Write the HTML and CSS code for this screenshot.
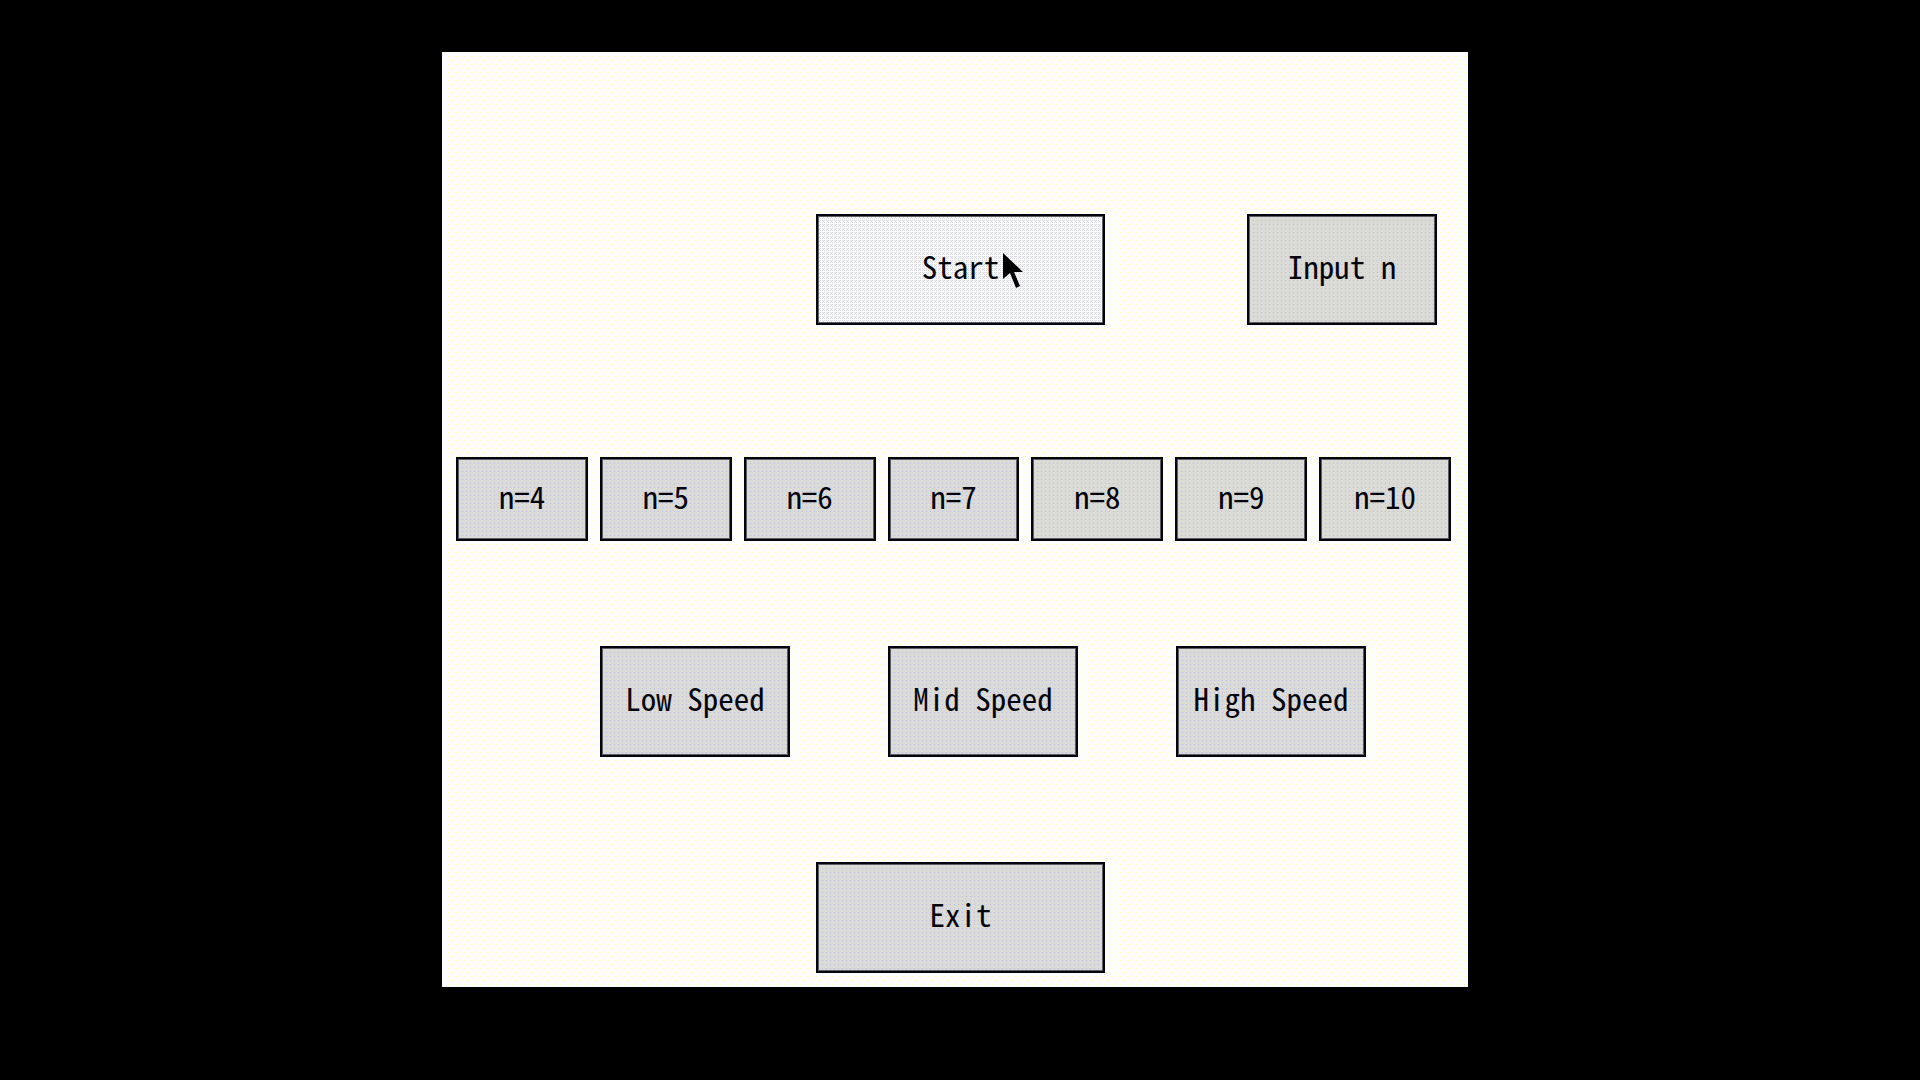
FILE: index.html
```html
<!DOCTYPE html>
<html lang="en">
<head>
<meta charset="utf-8">
<title>Menu</title>
<link rel="stylesheet" href="styles.css">
</head>
<body>
<main class="panel">
  <nav class="menu">
    <div class="row row-start">
      <button class="btn btn-start" type="button">Start<svg class="cursor" width="20" height="36" viewBox="0 0 20 36" aria-hidden="true"><path d="M0 0L20 19H11L17 33L13 35L7 20L0 26Z"/></svg></button>
      <button class="btn btn-input" type="button">Input n</button>
    </div>
    <div class="row row-sizes">
      <button class="btn btn-small" type="button">n=4</button>
      <button class="btn btn-small" type="button">n=5</button>
      <button class="btn btn-small" type="button">n=6</button>
      <button class="btn btn-small" type="button">n=7</button>
      <button class="btn btn-small" type="button">n=8</button>
      <button class="btn btn-small" type="button">n=9</button>
      <button class="btn btn-small" type="button">n=10</button>
    </div>
    <div class="row row-speed">
      <button class="btn btn-low" type="button">Low Speed</button>
      <button class="btn btn-mid" type="button">Mid Speed</button>
      <button class="btn btn-high" type="button">High Speed</button>
    </div>
    <div class="row row-exit">
      <button class="btn btn-exit" type="button">Exit</button>
    </div>
  </nav>
</main>
</body>
</html>
```
FILE: styles.css
```css
* {
  box-sizing: border-box;
}

body {
  margin: 0;
  min-height: 100vh;
  padding: 52px 452px 93px 442px;
  background: #000;
}

/* The light surface carries a sparse yellow dither. */
.panel {
  padding: 162px 17px 14px 14px;
  background-color: #fdfdff;
  background-image:
    conic-gradient(at 1px 1px, transparent 75%, #ffffa8 0),
    conic-gradient(at 1px 1px, transparent 75%, #ffffa8 0);
  background-position: 2px 0, 6px 4px;
  background-size: 8px 8px;
}

.menu {
  display: flex;
  flex-direction: column;
}

.row {
  display: grid;
}

.row-start {
  grid-template-columns: 360fr 289fr 142fr 190fr 14fr;
}

.row-sizes {
  grid-template-columns: repeat(7, minmax(0, 1fr));
  column-gap: 12px;
  margin-top: 132px;
}

.row-speed {
  grid-template-columns: 144fr 190fr 98fr 190fr 98fr 190fr 85fr;
  margin-top: 105px;
}

.row-exit {
  grid-template-columns: 360fr 289fr 346fr;
  margin-top: 105px;
}

.btn {
  height: 111px;
  padding: 0 0 7px;
  border: 2px solid #04040c;
  border-radius: 0;
  box-shadow: inset 0 0 0 1px #5c5c64;
  background-color: #dadad6;
  background-image: conic-gradient(at 1px 1px, transparent 75%, #bcbce0 0);
  background-size: 4px 4px;
  color: #04040c;
  font-family: "Noto Sans CJK SC", sans-serif;
  font-size: 31px;
  line-height: 36px;
  font-feature-settings: "hwid";
  white-space: nowrap;
}

.btn-start {
  position: relative;
  background-color: #fcfcfc;
  background-image:
    conic-gradient(at 1px 1px, transparent 75%, #d8d8e0 0),
    conic-gradient(at 1px 1px, transparent 75%, #d8d8e0 0),
    conic-gradient(at 1px 1px, transparent 75%, #ffffa0 0);
  background-position: 0 0, 1px 1px, 1px 0;
  background-size: 2px 2px, 4px 4px, 4px 4px;
}

.btn-start,
.btn-exit,
.btn-low {
  grid-column: 2;
}

.btn-input,
.btn-mid {
  grid-column: 4;
}

.btn-high {
  grid-column: 6;
}

.btn-small {
  height: 84px;
}

/* Pointer resting over the Start button */
.cursor {
  position: absolute;
  left: 185px;
  top: 37px;
  fill: #000;
}
```
